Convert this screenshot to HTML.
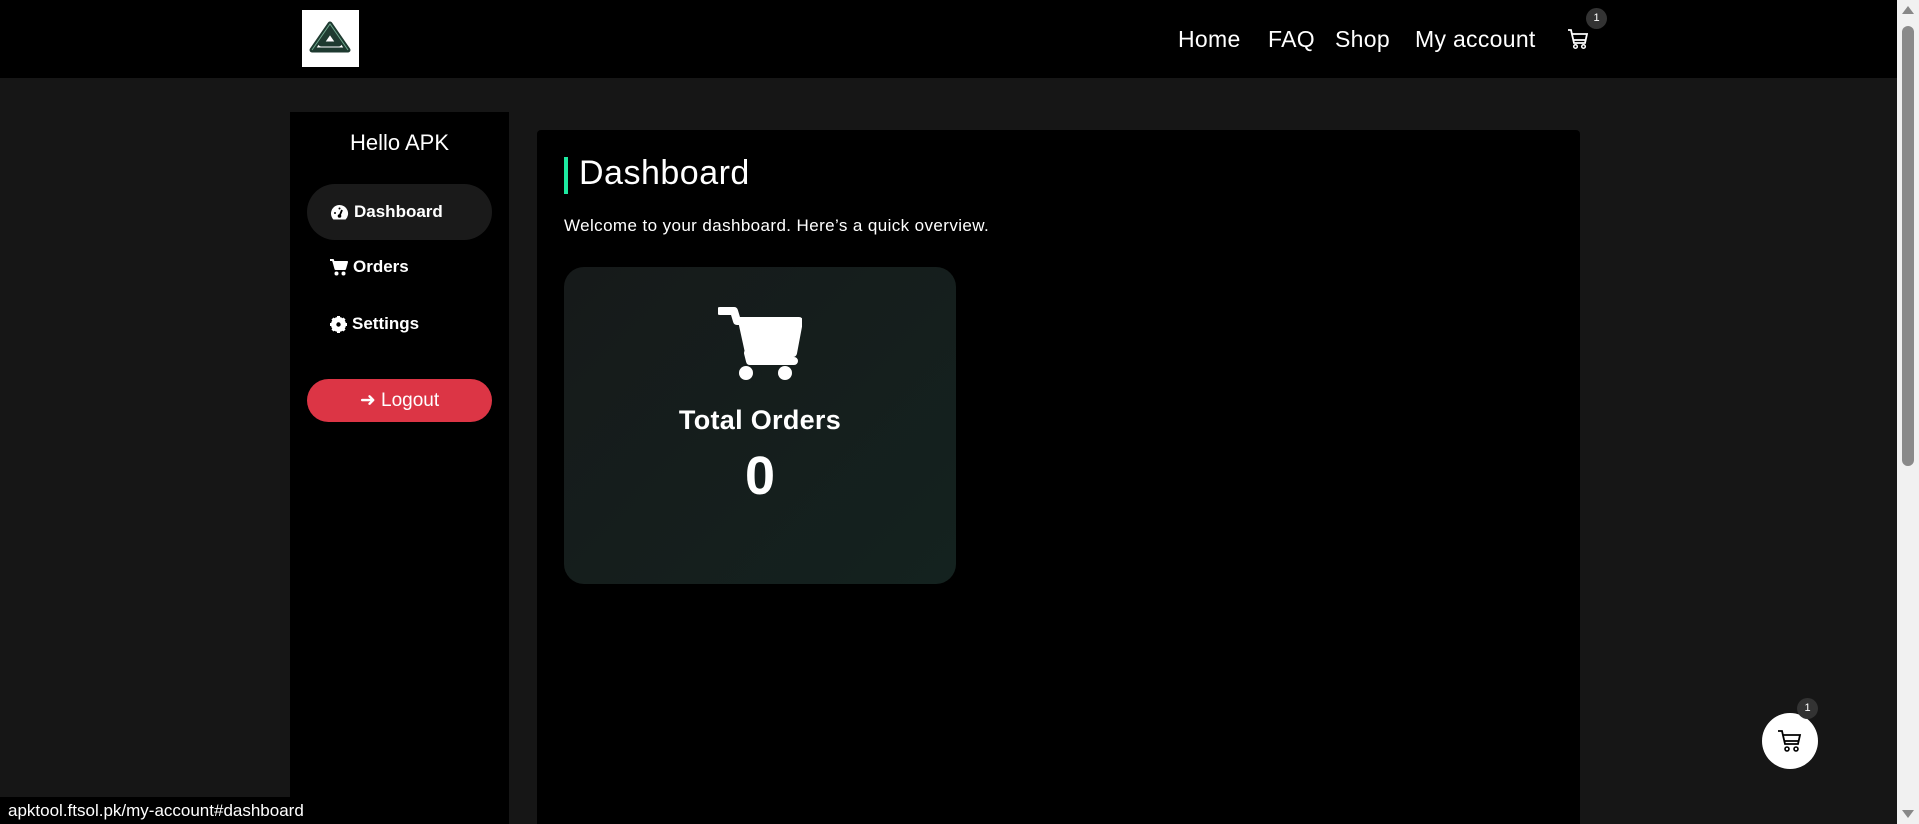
<!DOCTYPE html>
<html><head><style>
*{margin:0;padding:0;box-sizing:border-box}
body{width:1919px;height:824px;overflow:hidden;background:#161616;font-family:"Liberation Sans",sans-serif;color:#fff;position:relative}
.hdr{position:absolute;left:0;top:0;width:1897px;height:78px;background:#000}
.logo{position:absolute;left:302px;top:10px;width:57px;height:57px;background:#fff}
.nav{position:absolute;top:26px;font-size:23px;color:#fff;letter-spacing:0.3px}
.side{position:absolute;left:290px;top:112px;width:219px;height:712px;background:#000}
.main{position:absolute;left:537px;top:130px;width:1043px;height:694px;background:#000;border-radius:4px 4px 0 0}
.item{position:absolute;left:17px;width:185px;height:56px;border-radius:28px;font-size:17px;font-weight:bold;line-height:56px;padding-left:23px;display:flex;align-items:center;gap:5px}
.scroll{position:absolute;left:1897px;top:0;width:22px;height:824px;background:#f1f1f1}
</style></head><body>
<div class="hdr">
 <div class="logo"><svg width="57" height="57" viewBox="0 0 57 57"><path d="M10 40 L28 14 L46 40 Z M19 34 L28 21 L37 34 Z" fill="none" stroke="#1e3a30" stroke-width="5" stroke-linejoin="round"/><path d="M10 40 L28 14 L46 40" fill="none" stroke="#6fa88e" stroke-width="1"/></svg></div>
 <div class="nav" style="left:1178px">Home</div>
 <div class="nav" style="left:1268px">FAQ</div>
 <div class="nav" style="left:1335px">Shop</div>
 <div class="nav" style="left:1415px">My account</div>
 <svg style="position:absolute;left:1567px;top:28px" width="22" height="22" viewBox="0 0 22 22"><path d="M1 2h3l3 13h11l2-9H5.5M7 12h12" fill="none" stroke="#fff" stroke-width="1.8"/><circle cx="8.5" cy="18.5" r="1.8" fill="none" stroke="#fff" stroke-width="1.5"/><circle cx="16.5" cy="18.5" r="1.8" fill="none" stroke="#fff" stroke-width="1.5"/></svg>
 <div style="position:absolute;left:1586px;top:8px;width:21px;height:21px;border-radius:50%;background:#333;font-size:11px;text-align:center;line-height:21px">1</div>
</div>
<div class="side">
 <div style="position:absolute;top:18px;width:100%;text-align:center;font-size:22px">Hello APK</div>
 <div class="item" style="top:72px;background:#1a1a1a"><svg width="19" height="17" viewBox="0 0 19 17"><path d="M9.5 1A8.5 8.5 0 0 0 1 9.5c0 2.3.9 4.4 2.4 6h12.2A8.5 8.5 0 0 0 9.5 1z" fill="#fff"/><path d="M9.5 12L12 6" stroke="#000" stroke-width="1.8"/><circle cx="9.5" cy="12" r="1.8" fill="#000"/><circle cx="5" cy="9" r="1" fill="#000"/><circle cx="9.5" cy="4.5" r="1" fill="#000"/></svg>Dashboard</div>
 <div class="item" style="top:127px"><svg width="18" height="17" viewBox="0 0 18 17"><path d="M0 1h3l2.5 9h9.5l2-7H4" fill="#fff" stroke="#fff" stroke-width="2" stroke-linejoin="round"/><circle cx="6.5" cy="14.5" r="2" fill="#fff"/><circle cx="13.5" cy="14.5" r="2" fill="#fff"/></svg>Orders</div>
 <div class="item" style="top:184px"><svg width="17" height="17" viewBox="0 0 17 17"><circle cx="8.5" cy="8.5" r="5.5" fill="none" stroke="#fff" stroke-width="4"/><path d="M8.5 0v17M0 8.5h17M2.5 2.5l12 12M14.5 2.5l-12 12" stroke="#fff" stroke-width="3"/><circle cx="8.5" cy="8.5" r="2.2" fill="#000"/></svg>Settings</div>
 <div style="position:absolute;left:17px;top:267px;width:185px;height:43px;border-radius:22px;background:#dc3545;text-align:center;line-height:43px;font-size:19px">➜ Logout</div>
</div>
<div class="main">
 <div style="position:absolute;left:27px;top:27px;width:4px;height:37px;background:#1de9a0"></div>
 <div style="position:absolute;left:42px;top:24px;font-size:34px;letter-spacing:0.5px">Dashboard</div>
 <div style="position:absolute;left:27px;top:86px;font-size:17px;letter-spacing:0.4px">Welcome to your dashboard. Here’s a quick overview.</div>
 <div style="position:absolute;left:27px;top:137px;width:392px;height:317px;border-radius:20px;background:linear-gradient(135deg,#161a1a,#14221f)">
  <svg style="position:absolute;left:154px;top:40px" width="84" height="75" viewBox="0 0 84 75"><path d="M2 4h14l3 10h62l-6 32H30l2 8h44" fill="none" stroke="#fff" stroke-width="8" stroke-linejoin="round" stroke-linecap="round"/><path d="M20 14h61l-6 32H27z" fill="#fff"/><circle cx="28" cy="66" r="7" fill="#fff"/><circle cx="67" cy="66" r="7" fill="#fff"/></svg>
  <div style="position:absolute;top:138px;width:100%;text-align:center;font-size:27px;font-weight:bold;letter-spacing:0.3px">Total Orders</div>
  <div style="position:absolute;top:178px;width:100%;text-align:center;font-size:54px;font-weight:bold">0</div>
 </div>
</div>
<div style="position:absolute;left:1762px;top:713px;width:56px;height:56px;border-radius:50%;background:#fff"><svg style="position:absolute;left:15px;top:16px" width="26" height="24" viewBox="0 0 26 24"><path d="M1 2h4l3 13h13l2-9H6M8 12h13" fill="none" stroke="#000" stroke-width="1.8"/><circle cx="10" cy="20" r="2" fill="none" stroke="#000" stroke-width="1.6"/><circle cx="19" cy="20" r="2" fill="none" stroke="#000" stroke-width="1.6"/></svg></div>
<div style="position:absolute;left:1797px;top:698px;width:21px;height:21px;border-radius:50%;background:#333;font-size:11px;text-align:center;line-height:21px">1</div>
<div style="position:absolute;left:0;top:797px;height:27px;padding:0 8px;background:#000;font-size:17px;line-height:27px;color:#fff">apktool.ftsol.pk/my-account#dashboard</div>
<div class="scroll"><div style="position:absolute;left:5px;top:26px;width:12px;height:440px;border-radius:6px;background:#8a8a8a"></div>
<div style="position:absolute;left:5px;top:6px;border:6px solid transparent;border-bottom:8px solid #888;border-top:0"></div>
<div style="position:absolute;left:5px;top:810px;border:6px solid transparent;border-top:8px solid #888;border-bottom:0"></div></div>
</body></html>
